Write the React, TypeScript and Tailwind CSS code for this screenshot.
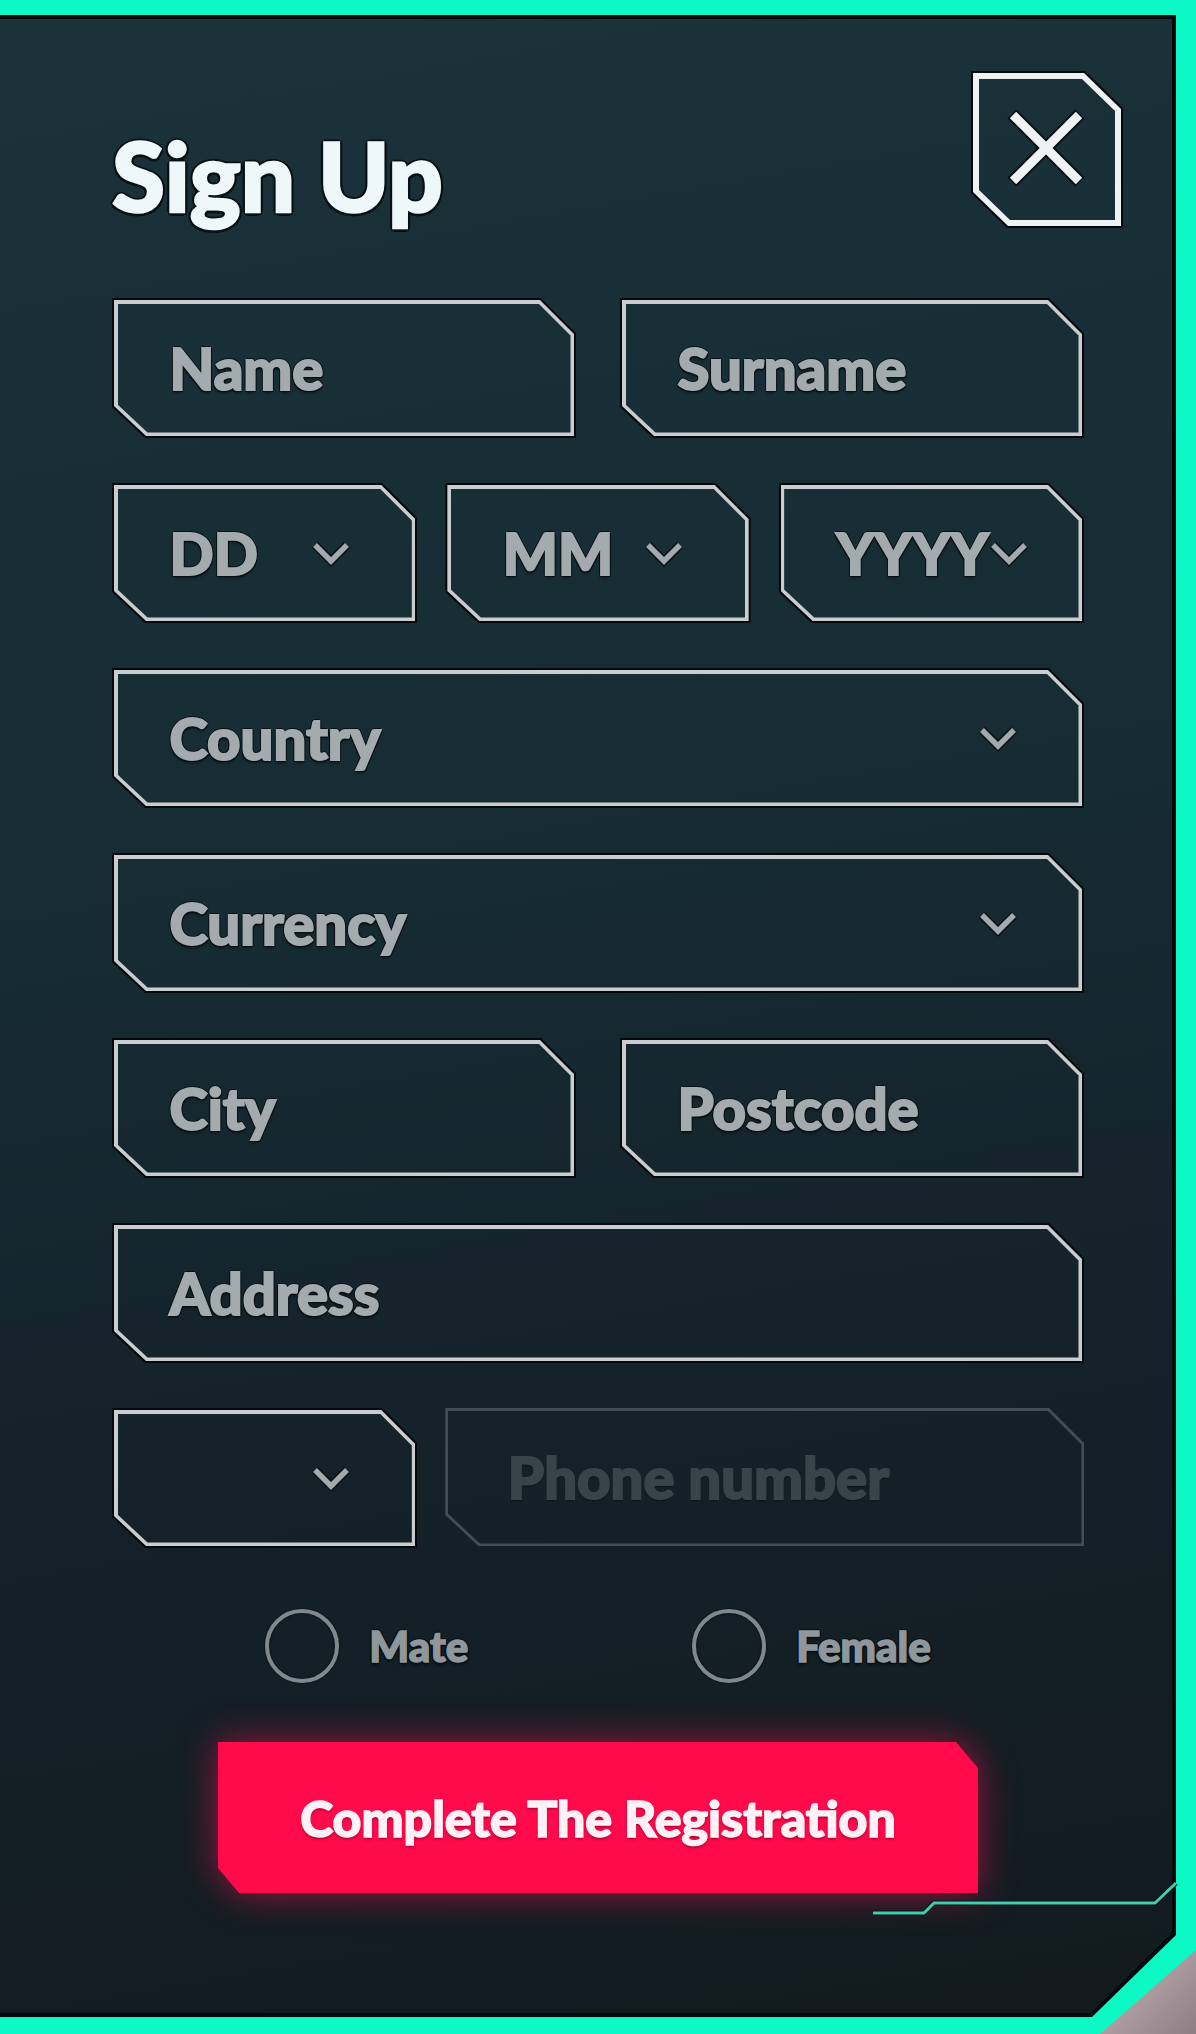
import React from 'react';

// shared bits
const fill =
  'bg-fixed bg-[linear-gradient(170deg,#1a323a_0%,#172c33_40%,#142028_72%,#121a1f_100%)]';
const labelShadow =
  '[text-shadow:2px_0_0_#081014,-2px_0_0_#081014,0_2px_0_#081014,0_-2px_0_#081014,1.5px_1.5px_0_#081014,-1.5px_-1.5px_0_#081014,1.5px_-1.5px_0_#081014,-1.5px_1.5px_0_#081014,0_3px_3px_rgba(0,0,0,0.5)]';

function Chevron({ color = '#a2aaae' }: { color?: string }) {
  return (
    <svg width="40" height="27" viewBox="0 0 40 27" className="shrink-0">
      <polyline points="4,5 20,21 36,5" fill="none" stroke="#081014" strokeWidth="8.5" />
      <polyline points="4,5 20,21 36,5" fill="none" stroke={color} strokeWidth="5.5" />
    </svg>
  );
}

interface FieldProps {
  label?: string;
  chevron?: boolean;
  className?: string;
}

function Field({ label, chevron, className = '' }: FieldProps) {
  return (
    <div
      className={`h-[140px] bg-[#05090b] p-[2px] [clip-path:polygon(0_0,calc(100%_-_35px)_0,100%_35px,100%_100%,33px_100%,0_calc(100%_-_31px))] ${className}`}
    >
      <div className="h-full bg-[#c9cdd0] p-[3.5px] [clip-path:polygon(0_0,calc(100%_-_34px)_0,100%_34px,100%_100%,32px_100%,0_calc(100%_-_30px))]">
        <div
          className={`h-full flex items-center justify-between pl-[52px] pr-[61px] ${fill} [clip-path:polygon(0_0,calc(100%_-_32px)_0,100%_32px,100%_100%,30px_100%,0_calc(100%_-_28px))]`}
        >
          <span
            className={`text-[58px] leading-none font-black text-[#a3abaf] [-webkit-text-stroke:2px_#a3abaf] whitespace-nowrap ${labelShadow}`}
          >
            {label}
          </span>
          {chevron && <Chevron />}
        </div>
      </div>
    </div>
  );
}

function DimField({ label, className = '' }: FieldProps) {
  return (
    <div
      className={`h-[138px] bg-[#434e54] p-[2.5px] [clip-path:polygon(0_0,calc(100%_-_35px)_0,100%_35px,100%_100%,33px_100%,0_calc(100%_-_31px))] ${className}`}
    >
      <div
        className={`h-full flex items-center pl-[60px] ${fill} [clip-path:polygon(0_0,calc(100%_-_34px)_0,100%_34px,100%_100%,32px_100%,0_calc(100%_-_30px))]`}
      >
        <span className="text-[58px] leading-none font-black text-[#39444a] [-webkit-text-stroke:2px_#39444a] whitespace-nowrap [text-shadow:0_2px_2px_rgba(0,0,0,0.45)]">
          {label}
        </span>
      </div>
    </div>
  );
}

function Radio({ label }: { label: string }) {
  return (
    <label className="flex items-center gap-[30px] cursor-pointer">
      <span className="w-[74px] h-[74px] rounded-full border-4 border-[#7f898d] shadow-[0_0_2px_#000,inset_0_0_2px_#000]" />
      <span
        className={`text-[42px] leading-none font-black text-[#8e979b] [-webkit-text-stroke:1.5px_#8e979b] ${labelShadow}`}
      >
        {label}
      </span>
    </label>
  );
}

function CloseButton() {
  return (
    <button className="w-[152px] h-[157px] shrink-0 bg-[#05090b] p-[2px] [clip-path:polygon(0_0,calc(100%_-_38px)_0,100%_37px,100%_100%,36px_100%,0_calc(100%_-_35px))]">
      <div className="h-full bg-[#eef2f3] p-[6px] [clip-path:polygon(0_0,calc(100%_-_37px)_0,100%_36px,100%_100%,35px_100%,0_calc(100%_-_34px))]">
        <div
          className={`h-full flex items-center justify-center ${fill} [clip-path:polygon(0_0,calc(100%_-_33px)_0,100%_32px,100%_100%,31px_100%,0_calc(100%_-_30px))]`}
        >
          <svg width="78" height="78" viewBox="0 0 78 78" className="ml-[-2px] mt-[-4px]">
            <g stroke="#081014" strokeWidth="13">
              <line x1="5" y1="5" x2="73" y2="73" />
              <line x1="73" y1="5" x2="5" y2="73" />
            </g>
            <g stroke="#eef2f3" strokeWidth="9">
              <line x1="6" y1="6" x2="72" y2="72" />
              <line x1="72" y1="6" x2="6" y2="72" />
            </g>
          </svg>
        </div>
      </div>
    </button>
  );
}

export default function App() {
  return (
    <div className="relative w-full h-[2034px] overflow-hidden bg-[#0cf9c5] pt-[15px] pr-[20px] pb-[17px] font-['Lato_Black','Lato',sans-serif]">
      {/* panel */}
      <div className="h-full w-[1176px] bg-[#05090b] pt-[4px] pr-[4px] pb-[4px] [clip-path:polygon(0_0,100%_0,100%_calc(100%_-_82px),calc(100%_-_84px)_100%,0_100%)]">
        <div
          className={`h-full pl-[112px] pt-[52px] pr-[49px] ${fill} [clip-path:polygon(0_0,100%_0,100%_calc(100%_-_80px),calc(100%_-_81px)_100%,0_100%)]`}
        >
          <div className="flex justify-between items-start">
            <h1 className="mt-[56px] text-[96px] leading-none font-black text-[#eef7f9] [-webkit-text-stroke:2.5px_#eef7f9] [text-shadow:3.5px_0_0_#081014,-3.5px_0_0_#081014,0_3.5px_0_#081014,0_-3.5px_0_#081014,2.5px_2.5px_0_#081014,-2.5px_-2.5px_0_#081014,2.5px_-2.5px_0_#081014,-2.5px_2.5px_0_#081014]">
              Sign Up
            </h1>
            <CloseButton />
          </div>

          <form className="w-[972px] mt-[70px] flex flex-col gap-[45px]">
            <div className="grid grid-cols-2 gap-[44px]">
              <Field label="Name" />
              <Field label="Surname" />
            </div>
            <div className="grid grid-cols-3 gap-[28px]">
              <Field label="DD" chevron />
              <Field label="MM" chevron />
              <Field label="YYYY" chevron />
            </div>
            <Field label="Country" chevron />
            <Field label="Currency" chevron />
            <div className="grid grid-cols-2 gap-[44px]">
              <Field label="City" />
              <Field label="Postcode" />
            </div>
            <Field label="Address" />
            <div className="grid grid-cols-3 gap-[28px] items-start">
              <Field label="" chevron />
              <DimField label="Phone number" className="col-span-2" />
            </div>

            <div className="flex justify-center items-center gap-[224px] mt-[16px]">
              <Radio label="Mate" />
              <Radio label="Female" />
            </div>

            <div className="self-center mt-[14px] [filter:drop-shadow(0_0_18px_rgba(255,10,75,0.6))]">
              <button
                type="button"
                className="w-[760px] h-[151px] bg-[#ff0a4b] flex items-center justify-center [clip-path:polygon(0_0,calc(100%_-_22px)_0,100%_26px,100%_100%,21px_100%,0_calc(100%_-_25px))]"
              >
                <span className="text-[50px] leading-none font-black text-[#fff1f5] [-webkit-text-stroke:1.5px_#fff1f5] [text-shadow:0_2px_3px_rgba(110,0,30,0.7)]">
                  Complete The Registration
                </span>
              </button>
            </div>
          </form>
        </div>
      </div>

      {/* bottom-right decoration */}
      <svg className="absolute left-[872px] top-[1880px]" width="306" height="36" viewBox="0 0 306 36">
        <polyline points="1,33 52,33 62,23 283,23 304,3" fill="none" stroke="#081014" strokeWidth="5" />
        <polyline points="1,33 52,33 62,23 283,23 304,3" fill="none" stroke="#3fcdae" strokeWidth="3" />
      </svg>
      <div className="absolute right-0 bottom-0 w-[96px] h-[84px] bg-[linear-gradient(135deg,#c9b6bb,#8e7e83)] [clip-path:polygon(100%_0,100%_100%,0_100%)]" />
    </div>
  );
}
